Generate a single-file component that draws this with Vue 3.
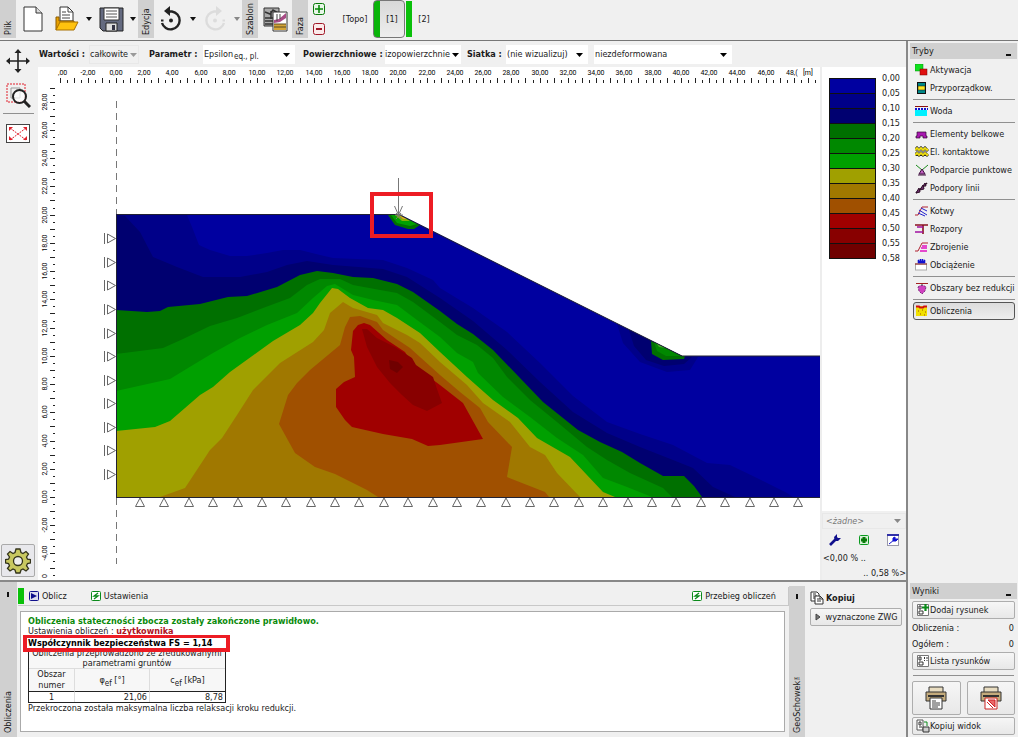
<script setup>
import { ref } from 'vue'

const valueKind = ref('całkowite')
const parameter = ref('Epsilon')
const surfaces = ref('izopowierzchnie')
const mesh = ref('(nie wizualizuj)')
const deformation = ref('niezdeformowana')
const preset = ref('<żadne>')

const SCALE = 14.12
const ORIGIN_X = 116
const ORIGIN_Y = 497

const label = (n) => `${n},00`
const range = (from, to, step = 1) => {
  const out = []
  for (let n = from; n <= to; n += step) out.push(n)
  return out
}

const topTicks = range(-8, 99).map((n) => ({
  x: Math.round(ORIGIN_X + (n / 2) * SCALE),
  major: n % 2 === 0,
}))
const topLabels = range(-2, 46, 2).map((n) => ({
  x: Math.round(ORIGIN_X + n * SCALE),
  text: label(n),
}))
const sideTicks = range(-11, 58).map((n) => ({
  y: Math.round(ORIGIN_Y - (n / 2) * SCALE),
  major: n % 2 === 0,
}))
const sideLabels = range(-4, 28, 2).map((n) => ({
  y: Math.round(ORIGIN_Y - n * SCALE),
  text: label(n),
}))
const sideSupports = range(0, 10).map((i) => Math.round(238.4 + i * 23.53))
const baseSupports = range(0, 27).map((i) => Math.round(140 + i * 24.38))

const contours = [
  { fill: '#0000a0', points: '116,214 399,214 682,356 820,356 820,497 116,497' },
  {
    fill: '#000089',
    points:
      '116,215 187,215 192,227 199,245 210,250 230,256 247,256 267,253 283,250 300,250 320,255 333,258 357,259 383,260 407,268 433,280 440,288 473,308 507,332 540,363 573,396 607,422 640,434 673,445 707,463 730,465 757,478 787,493 793,497 116,497',
  },
  {
    fill: '#000070',
    points:
      '116,215 125,216 140,232 153,257 177,267 203,277 240,277 267,272 287,265 307,261 333,265 383,269 407,277 440,298 473,321 507,350 540,382 573,412 607,433 640,447 673,460 693,468 713,487 735,497 116,497',
  },
  {
    fill: '#007000',
    points:
      '116,310 147,312 160,311 168,307 200,304 228,297 247,296 277,287 300,275 317,271 333,273 353,277 373,278 397,284 413,292 440,311 457,324 473,334 493,350 520,378 543,402 578,430 600,442 622,452 640,463 663,476 684,476 694,486 702,497 116,497',
  },
  {
    fill: '#008800',
    points:
      '116,354 163,348 183,339 210,326 237,318 263,308 290,298 307,285 320,279 340,279 353,285 380,290 397,293 413,302 440,322 457,335 477,345 493,358 507,377 530,400 557,422 587,447 607,460 630,473 663,488 672,497 116,497',
  },
  {
    fill: '#00a000',
    points:
      '116,391 170,379 193,365 213,353 240,338 267,325 297,313 313,298 327,286 335,284 353,295 373,300 397,305 417,320 440,337 457,353 473,362 478,373 503,397 530,417 557,438 583,455 603,478 627,487 652,497 116,497',
  },
  {
    fill: '#a0a000',
    points:
      '116,431 155,427 170,421 200,395 213,387 230,372 273,341 300,325 313,313 320,303 332,288 338,289 350,298 368,308 383,310 397,318 420,333 440,352 467,377 493,400 518,418 537,438 570,457 603,492 615,497 116,497',
  },
  {
    fill: '#a07800',
    points:
      '160,497 185,488 210,450 222,438 237,415 253,390 280,363 313,342 324,330 330,313 343,302 353,308 377,315 383,323 407,335 420,343 440,362 467,385 483,403 510,422 530,447 545,455 557,473 580,497',
  },
  {
    fill: '#a05000',
    points:
      '378,497 367,490 335,474 315,467 295,453 279,424 288,395 297,383 310,370 340,345 345,327 350,317 360,316 377,322 383,330 410,348 440,375 460,392 480,408 488,422 512,447 507,477 545,492 549,497',
  },
  {
    fill: '#a00000',
    points:
      '358,325 364,323 370,325 387,340 405,352 413,365 440,385 463,403 483,439 440,445 428,446 412,439 383,434 352,427 345,420 336,407 336,389 344,382 355,377 354,357 351,350 353,331',
  },
  {
    fill: '#880000',
    points:
      '362,329 367,329 377,338 395,347 412,358 416,365 433,377 437,389 442,403 427,411 413,405 402,395 390,383 377,367 367,347',
  },
  { fill: '#700000', points: '389,360 398,362 403,367 397,373 390,369' },
  // crest
  { fill: '#007000', points: '388,215 395,225 408,229 414,229 420,225 399,215' },
  { fill: '#00a000', points: '391,215 397,223 410,226 417,224 400,215' },
  { fill: '#88b000', points: '395,215 402,221 410,221 400,215' },
  { fill: '#e0a030', points: '399,215 403,219 407,219' },
  // toe
  { fill: '#000089', points: '617,324 623,343 640,362 667,372 690,370 698,357 682,356' },
  { fill: '#000070', points: '629,330 634,346 646,360 664,366 684,364 692,357 682,356' },
  { fill: '#007000', points: '651,341 652,354 663,360 684,359 685,356 682,356' },
  { fill: '#008800', points: '654,342 657,351 666,356 681,356' },
  { fill: '#40a828', points: '656,343 659,347 666,348' },
]

const legendColors = [
  '#0000a0', '#000088', '#000070', '#007000', '#008800', '#00a000',
  '#a0a000', '#a07800', '#a05000', '#a00000', '#880000', '#700000',
]
const legendLabels = [
  '0,00', '0,05', '0,10', '0,15', '0,20', '0,25', '0,30',
  '0,35', '0,40', '0,45', '0,50', '0,55', '0,58',
]

const modeGroups = [
  [
    { id: 'activation', text: 'Aktywacja' },
    { id: 'assign', text: 'Przyporządkow.' },
  ],
  [{ id: 'water', text: 'Woda' }],
  [
    { id: 'beams', text: 'Elementy belkowe' },
    { id: 'contacts', text: 'El. kontaktowe' },
    { id: 'points', text: 'Podparcie punktowe' },
    { id: 'lines', text: 'Podpory linii' },
  ],
  [
    { id: 'anchors', text: 'Kotwy' },
    { id: 'props', text: 'Rozpory' },
    { id: 'reinf', text: 'Zbrojenie' },
    { id: 'load', text: 'Obciążenie' },
  ],
  [{ id: 'regions', text: 'Obszary bez redukcji' }],
  [{ id: 'analysis', text: 'Obliczenia' }],
]
const activeMode = ref('analysis')
const stage = ref('[1]')
</script>

<template>
  <div class="app">
    <header class="toolbar">
      <span class="vtab">Plik</span>
      <button class="tool" aria-label="Nowy">
        <svg width="20" height="26" viewBox="0 0 20 26"><path d="M1 1h12l6 6v18H1z" fill="#fff" stroke="#333" /><path d="M13 1v6h6" fill="#ddd" stroke="#333" /></svg>
      </button>
      <button class="tool" aria-label="Otwórz">
        <svg width="24" height="26" viewBox="0 0 24 26">
          <path d="M5 15V1h8l5 5v9z" fill="#fff" stroke="#333" /><path d="M13 1v5h5M7 6h4M7 9h8M7 12h8" fill="none" stroke="#444" />
          <path d="M1 24V11h3v4h15v3" fill="#e8a000" stroke="#8a5a00" /><path d="M1 24l4-8h18l-4 8z" fill="#ffc20e" stroke="#a87000" />
        </svg>
      </button>
      <button class="arrow" aria-label="Ostatnie pliki"><svg width="6" height="4" viewBox="0 0 6 4"><path d="M0 0h6L3 4z" fill="#111" /></svg></button>
      <button class="tool" aria-label="Zapisz">
        <svg width="25" height="25" viewBox="0 0 25 25">
          <path d="M1 1h23v23H4l-3-3z" fill="#646a80" stroke="#222" /><path d="M5 1h15v12H5z" fill="#fff" stroke="#333" /><path d="M7 4h11M7 7h11M7 10h11" stroke="#555" />
          <path d="M7 16h11v8H7z" fill="#ddd" stroke="#222" /><path d="M13 18h3v5h-3z" fill="#334" />
        </svg>
      </button>
      <button class="arrow" aria-label="Zapisz jako"><svg width="6" height="4" viewBox="0 0 6 4"><path d="M0 0h6L3 4z" fill="#111" /></svg></button>
      <span class="vtab">Edycja</span>
      <button class="tool" aria-label="Cofnij">
        <svg width="24" height="26" viewBox="0 0 24 26"><path d="M9 5.500h4A9 9 0 1 1 3 17" fill="none" stroke="#222" stroke-width="2.400" /><path d="M2 14.500h2.500" stroke="#222" stroke-width="2" /><path d="M11 0v10L5 5z" fill="#222" /><circle cx="12" cy="14.500" r="2" fill="#222" /></svg>
      </button>
      <button class="arrow" aria-label="Lista cofnięć"><svg width="6" height="4" viewBox="0 0 6 4"><path d="M0 0h6L3 4z" fill="#111" /></svg></button>
      <button class="tool" aria-label="Ponów" disabled>
        <svg width="24" height="26" viewBox="0 0 24 26"><path d="M15 5.500h-4A9 9 0 1 0 21 17" fill="none" stroke="#dcdcdc" stroke-width="2.400" /><path d="M19.500 14.500H22" stroke="#dcdcdc" stroke-width="2" /><path d="M13 0v10l6-5z" fill="#dcdcdc" /><circle cx="12" cy="14.500" r="2" fill="#dcdcdc" /></svg>
      </button>
      <button class="arrow" aria-label="Lista ponowień" disabled><svg width="6" height="4" viewBox="0 0 6 4"><path d="M0 0h6L3 4z" fill="#888" /></svg></button>
      <span class="vtab">Szablon</span>
      <button class="tool" aria-label="Szablon">
        <svg width="25" height="26" viewBox="0 0 25 26">
          <path d="M1 2h15v18H1z" fill="#aaa" stroke="#333" /><path d="M2 6l5 2 3-4 5 3M2 12h8M8 5v8M2 15h8M2 18h8" fill="none" stroke="#333" stroke-width="1.500" />
          <path d="M10 6h14v19H10z" fill="#fff" stroke="#333" /><path d="M11 14l5-1 7-6v5l-6 4-6 1z" fill="#a84c86" /><path d="M14 8v7M17 8v5" stroke="#444" /><path d="M11 18h12v6H11z" fill="#d4a437" /><path d="M11 18h12M11 21h12" stroke="#5a4a20" />
        </svg>
      </button>
      <span class="vtab">Faza</span>
      <div class="stage-edit">
        <button class="mini" aria-label="Dodaj fazę"><svg width="12" height="12" viewBox="0 0 12 12"><rect x=".5" y=".5" width="11" height="11" rx="2" fill="#e8f6e8" stroke="#0a7a0a" /><path d="M6 2v8M2 6h8" stroke="#0a8a0a" stroke-width="1.600" /></svg></button>
        <button class="mini" aria-label="Usuń fazę"><svg width="12" height="12" viewBox="0 0 12 12"><rect x=".5" y=".5" width="11" height="11" rx="2" fill="#fbeaea" stroke="#a01828" /><path d="M3 6h6" stroke="#a01828" stroke-width="2" /></svg></button>
      </div>
      <button class="stage topo" @click="stage = '[Topo]'">[Topo]</button>
      <button class="stage current" @click="stage = '[1]'">[1]</button>
      <span class="stage-bar"></span>
      <button class="stage" @click="stage = '[2]'">[2]</button>
    </header>

    <div class="workspace">
      <div class="left">
        <div class="upper">
          <nav class="side-tools" aria-label="Widok">
            <button class="tool" aria-label="Przesuń">
              <svg width="24" height="24" viewBox="0 0 24 24"><path d="M12 3v18M3 12h18" stroke="#222" stroke-width="1.600" /><path d="M12 0l3.500 4h-7zM12 24l3.500-4h-7zM0 12l4-3.500v7zM24 12l-4-3.500v7z" fill="#222" /></svg>
            </button>
            <button class="tool" aria-label="Powiększ obszar">
              <svg width="26" height="26" viewBox="0 0 26 26"><path d="M2 2h18v18H2z" fill="none" stroke="#e0202c" stroke-dasharray="2 1" /><path d="M6 6h9v10H6z" fill="none" stroke="#999" /><circle cx="14.500" cy="14.500" r="6.500" fill="#fff" fill-opacity=".7" stroke="#222" stroke-width="2" /><path d="M19 19l6 6" stroke="#222" stroke-width="3" /></svg>
            </button>
            <hr />
            <button class="tool" aria-label="Pokaż wszystko">
              <svg width="26" height="20" viewBox="0 0 26 20"><rect x="1.500" y=".5" width="23" height="18" fill="#fff" stroke="#444" /><path d="M5 4l16 12M21 4L5 16" stroke="#e0202c" stroke-dasharray="2 1" /><path d="M4 7V3h4zM22 7V3h-4zM4 12v4h4zM22 12v4h-4z" fill="#e0202c" /></svg>
            </button>
            <button class="gear" aria-label="Ustawienia widoku">
              <svg width="26" height="26" viewBox="-13 -13 26 26">
                <path d="M-2-12h4l1 3.500 2 1L8-9.500 10.500-7 8.500-4l1 2.200 3 .3v3.500l-3 .5-1 2.200 2 3L8 10 5 8 3 9l-1 3h-4l-1-3-2-1-3 2-2.500-2.500 2-2.800-1-2.200-3-.5v-3.500l3-.3 1-2.200-2-3L-8-9.500l3 2 2-1z" fill="#c8c860" stroke="#33331a" stroke-width="1.300" />
                <circle r="4.500" fill="#eee" stroke="#33331a" stroke-width="1.300" />
              </svg>
            </button>
          </nav>

          <div class="center">
            <form class="params" @submit.prevent>
              <label for="kind">Wartości :</label>
              <span class="drop off"><select id="kind" v-model="valueKind" disabled><option>całkowite</option></select><svg width="7" height="4" viewBox="0 0 7 4"><path d="M0 0h7L3.500 4z" fill="#999" /></svg></span>
              <label for="param">Parametr :</label>
              <span class="drop"><select id="param" v-model="parameter"><option>Epsilon</option></select><sub>eq., pl.</sub><svg width="7" height="4" viewBox="0 0 7 4"><path d="M0 0h7L3.500 4z" fill="#000" /></svg></span>
              <label for="surf">Powierzchniowe :</label>
              <span class="drop tight"><select id="surf" v-model="surfaces"><option>izopowierzchnie</option></select><svg width="7" height="4" viewBox="0 0 7 4"><path d="M0 0h7L3.500 4z" fill="#000" /></svg></span>
              <label for="mesh">Siatka :</label>
              <span class="drop"><select id="mesh" v-model="mesh"><option>(nie wizualizuj)</option></select><svg width="7" height="4" viewBox="0 0 7 4"><path d="M0 0h7L3.500 4z" fill="#000" /></svg></span>
              <span class="drop"><select v-model="deformation" aria-label="Deformacja"><option>niezdeformowana</option></select><svg width="7" height="4" viewBox="0 0 7 4"><path d="M0 0h7L3.500 4z" fill="#000" /></svg></span>
            </form>

            <div class="view">
              <div class="canvas">
                <svg class="plot" viewBox="38 67 782 512" preserveAspectRatio="xMinYMin meet" role="img" aria-label="Odkształcenia plastyczne">
                  <g class="ruler">
                    <text x="58" y="75">,00</text>
                    <text v-for="l in topLabels" :key="l.text" :x="l.x" y="75" text-anchor="middle">{{ l.text }}</text>
                    <text x="786" y="75">48,(</text>
                    <text x="803" y="75">[m]</text>
                    <text v-for="l in sideLabels" :key="l.text" :transform="`translate(47 ${l.y}) rotate(-90)`" text-anchor="middle">{{ l.text }}</text>
                    <text transform="translate(47 578) rotate(-90)">0</text>
                  </g>
                  <g fill="#222">
                    <rect v-for="t in topTicks" :key="t.x" :x="t.x" :y="t.major ? 78 : 80" width="1" :height="t.major ? 5 : 3" />
                    <rect v-for="t in sideTicks" :key="t.y" :x="t.major ? 50 : 53" :y="t.y" :width="t.major ? 5 : 2" height="1" />
                  </g>
                  <path d="M116.500 101V214M116.500 498V564" stroke="#777" stroke-dasharray="7 5" />
                  <polygon v-for="(c, i) in contours" :key="i" :points="c.points" :fill="c.fill" />
                  <path d="M116.500 497.500V214.500H399L682 356H820M116 497.500H820" fill="none" stroke="#223" />
                  <g fill="#fff" stroke="#666">
                    <path v-for="y in sideSupports" :key="y" :d="`M104.500 ${y - 5}v11M107.500 ${y - 4}v9l8-4.500z`" />
                    <path v-for="x in baseSupports" :key="x" :d="`M${x} 498l-4.500 8.500h9z`" />
                  </g>
                  <path d="M398.500 178V216M394.500 206l4 9 4-9M395 215h8M396 219l5-6M396 213l5 6" fill="none" stroke="#777" />
                  <rect x="372" y="194" width="59" height="42" fill="none" stroke="#ed1c24" stroke-width="4" />
                </svg>
              </div>

              <div class="legend-panel">
                <div class="legend">
                  <div class="swatches"><i v-for="c in legendColors" :key="c" :style="{ background: c }"></i></div>
                  <div class="legend-labels"><span v-for="l in legendLabels" :key="l">{{ l }}</span></div>
                </div>
                <div class="scale">
                  <span class="drop off preset"><select v-model="preset" aria-label="Skala" disabled><option>&lt;żadne&gt;</option></select><svg width="7" height="4" viewBox="0 0 7 4"><path d="M0 0h7L3.500 4z" fill="#888" /></svg></span>
                  <div class="scale-tools">
                    <button class="mini" aria-label="Edytuj skalę"><svg width="12" height="12" viewBox="0 0 12 12"><path d="M1 11l6-6" stroke="#10108c" stroke-width="2.600" /><path d="M6 7L5 3l3-3v3l1 1h3L9 7z" fill="#10108c" /></svg></button>
                    <button class="mini" aria-label="Dodaj skalę"><svg width="12" height="12" viewBox="0 0 12 12"><rect x="1.500" y="1.500" width="9" height="9" rx="1" fill="#d8f0d8" stroke="#0a9a20" /><path d="M6 3v6M3 6h6" stroke="#0a7a0a" stroke-width="3" /></svg></button>
                    <button class="mini" aria-label="Ustawienia skali"><svg width="12" height="12" viewBox="0 0 12 12"><rect x=".5" y=".5" width="11" height="11" fill="#fff" stroke="#99a" /><path d="M0 1h12" stroke="#3030a8" stroke-width="2" /><path d="M2 10l5-4M6 7V4l2-1v2h3L9 7z" fill="#1010d0" stroke="#1010d0" /></svg></button>
                  </div>
                  <div class="low">&lt;0,00 % ..</div>
                  <div class="high">.. 0,58 %&gt;</div>
                </div>
              </div>
            </div>
          </div>
        </div>

        <div class="lower">
          <div class="vtab tall"><span>Obliczenia</span><b></b></div>
          <section class="output">
            <div class="run-bar">
              <span class="run-mark"></span>
              <button class="flat"><svg width="10" height="10" viewBox="0 0 10 10"><rect x=".5" y=".5" width="9" height="9" rx="1" fill="#dde" stroke="#10108c" /><path d="M2 2l6 3-6 3z" fill="#10108c" /></svg>Oblicz</button>
              <button class="flat settings"><svg width="10" height="10" viewBox="0 0 10 10"><rect x=".5" y=".5" width="9" height="9" rx="1" fill="#fff" stroke="#0a8a1a" /><path d="M7 2L3 5h4L3 8" fill="none" stroke="#0a8a1a" stroke-width="1.300" /></svg>Ustawienia</button>
              <button class="flat progress"><svg width="10" height="10" viewBox="0 0 10 10"><rect x=".5" y=".5" width="9" height="9" rx="1" fill="#fff" stroke="#0a8a1a" /><path d="M7 2L3 5h4L3 8" fill="none" stroke="#0a8a1a" stroke-width="1.300" /></svg>Przebieg obliczeń</button>
            </div>
            <div class="report">
              <p class="ok">Obliczenia stateczności zbocza zostały zakończone prawidłowo.</p>
              <p>Ustawienia obliczeń : <b class="user">użytkownika</b></p>
              <p class="fs">Współczynnik bezpieczeństwa FS = 1,14</p>
              <table>
                <colgroup><col class="c1" /><col /><col /></colgroup>
                <thead>
                  <tr class="title"><th colspan="3">Obliczenia przeprowadzono ze zredukowanymi<br />parametrami gruntów</th></tr>
                  <tr class="cols"><th>Obszar<br />numer</th><th>φ<sub>ef</sub> [°]</th><th>c<sub>ef</sub> [kPa]</th></tr>
                </thead>
                <tbody>
                  <tr><td class="num">1</td><td>21,06</td><td>8,78</td></tr>
                </tbody>
              </table>
              <p>Przekroczona została maksymalna liczba relaksacji kroku redukcji.</p>
            </div>
          </section>
          <div class="vtab tall geo"><span>GeoSchowek™</span><b></b></div>
          <section class="clip">
            <h2><svg width="14" height="14" viewBox="0 0 14 14"><path d="M1 1h6l2 2v7H1z" fill="#fff" stroke="#333" /><path d="M3 3h3M3 5h4M3 7h4" stroke="#333" /><path d="M5 5h5l3 3v5H5z" fill="#fff" stroke="#333" /><path d="M7 8h3M7 10h4M10 5v3h3" fill="none" stroke="#333" /></svg>Kopiuj</h2>
            <button class="push center-text"><svg width="6" height="8" viewBox="0 0 6 8"><path d="M1 1l4 3-4 3z" fill="#777" stroke="#444" /></svg>wyznaczone ZWG</button>
          </section>
        </div>
      </div>

      <aside class="right">
        <h2 class="bar">Tryby<b></b></h2>
        <nav class="modes">
          <div v-for="(group, g) in modeGroups" :key="g" class="group">
            <button v-for="m in group" :key="m.id" :class="['mode', { active: activeMode === m.id }]" @click="activeMode = m.id">
              <svg width="14" height="12" viewBox="0 0 14 12">
                <template v-if="m.id === 'activation'"><rect x="0" width="8" height="7" fill="#10e020" stroke="#0a8a0a" stroke-width=".5" /><rect x="5" y="5" width="7" height="6" fill="#e01010" stroke="#700" stroke-width=".5" /></template>
                <template v-else-if="m.id === 'assign'"><rect x="2.500" y=".5" width="8" height="11" fill="#088" stroke="#111" /><rect x="3" y="4" width="7" height="4" fill="#ffe820" stroke="#111" stroke-width=".5" /></template>
                <template v-else-if="m.id === 'water'"><path d="M0 1.500h13" stroke="#8a1010" /><path d="M0 4h13" stroke="#1010d0" stroke-width="2" stroke-dasharray="2 1" /><rect x="0" y="5" width="12" height="6" fill="#00f0ff" /></template>
                <template v-else-if="m.id === 'beams'"><path d="M2 4h9v4h1v2H8V8H5v2H1V8h1z" fill="#a818b0" stroke="#301030" stroke-width=".7" /></template>
                <template v-else-if="m.id === 'contacts'"><path d="M0 4l2-2 2 2 2-2 2 2 2-2 2 2 1-1M0 9l2-2 2 2 2-2 2 2 2-2 2 2 1-1" fill="none" stroke="#222" stroke-width="3" /><path d="M0 4l2-2 2 2 2-2 2 2 2-2 2 2 1-1M0 9l2-2 2 2 2-2 2 2 2-2 2 2 1-1" fill="none" stroke="#f0e010" stroke-width="1.800" /></template>
                <template v-else-if="m.id === 'points'"><path d="M1 1l6 5 6-5" fill="none" stroke="#1a8a1a" /><path d="M7 5l3 5H4z" fill="#c060c0" stroke="#401040" /><path d="M3 11h8" stroke="#401040" /></template>
                <template v-else-if="m.id === 'lines'"><path d="M1 11L12 1" stroke="#30102a" stroke-width="1.600" /><path d="M1 11l3-5 1 4zM5 8l3-5 1 4zM8 4l2-3 1 3z" fill="#703070" stroke="#30102a" /></template>
                <template v-else-if="m.id === 'anchors'"><path d="M0 10h3l4-8h6" fill="none" stroke="#b02030" /><path d="M4 5l8 5M3 8l7 3M6 3l6 3" stroke="#2020d0" /></template>
                <template v-else-if="m.id === 'props'"><path d="M0 2h8v9M8 2h5" fill="none" stroke="#8a1020" stroke-width="1.600" /><path d="M0 9h8M2 4h6" fill="none" stroke="#a010a0" stroke-width="1.500" /></template>
                <template v-else-if="m.id === 'reinf'"><path d="M0 10h3l4-8h6" fill="none" stroke="#b02030" /><path d="M7 5h5M6 7h6M5 10h7" stroke="#e010c0" stroke-width="1.300" /></template>
                <template v-else-if="m.id === 'load'"><rect x=".5" y="5" width="11" height="6" fill="#fff" stroke="#aaa" /><path d="M0 5h12" stroke="#811" /><path d="M3 4V1h1v1h1V0h1v2h1V0h1v2h1V1h1v3z" fill="#1010d0" stroke="#1010d0" stroke-width=".6" /></template>
                <template v-else-if="m.id === 'regions'"><path d="M1 1.500h12" stroke="#a02020" /><path d="M7 2v3" stroke="#333" /><path d="M3 5c2-2 6-2 8 0l-1 4-3 3-3-3z" fill="#d040c0" stroke="#803080" stroke-dasharray="2 1" /></template>
                <template v-else><rect x="1" y="1" width="11" height="10" fill="#f0e000" /><path d="M1 1.500h3l1 1h3l1-1h3" fill="none" stroke="#d01010" stroke-width="2" /><path d="M3 6h1M7 5h1M10 7h1M5 9h1M9 10h1" stroke="#a05000" /></template>
              </svg>{{ m.text }}
            </button>
          </div>
        </nav>

        <div class="results">
          <h2 class="bar">Wyniki<b></b></h2>
          <button class="push"><svg width="14" height="14" viewBox="0 0 14 14"><path d="M1.500 1.500h11v11h-11z" fill="#fff" stroke="#777" /><path d="M3 3h2v3H3zM3 8h4v3H3z" fill="none" stroke="#333" /><path d="M9.500 1v7M6 4.500h7" stroke="#0a8a1a" stroke-width="2.200" /></svg>Dodaj rysunek</button>
          <dl><dt>Obliczenia :</dt><dd>0</dd><dt>Ogółem :</dt><dd>0</dd></dl>
          <button class="push flush"><svg width="14" height="14" viewBox="0 0 14 14"><path d="M1.500 1.500h11v11h-11z" fill="#fff" stroke="#777" /><path d="M3 3h2v3H3zM3 8h4v3H3z" fill="none" stroke="#333" /><path d="M8.500 3v4M11 3v4" stroke="#333" stroke-dasharray="2 1" /></svg>Lista rysunków</button>
          <hr />
          <div class="printers">
            <button class="push" aria-label="Drukuj raport"><svg width="22" height="26" viewBox="0 0 22 26"><path d="M4 7V2h14v5" fill="#e8dcc0" stroke="#333" /><path d="M1 7h20v9H1z" fill="#c4ab7c" stroke="#333" /><path d="M3 11h16" stroke="#333" stroke-width="2" /><path d="M5 13h12v11H5z" fill="#fff" stroke="#333" /><path d="M7 16h4M7 18h8M7 20h8M7 22h6" stroke="#444" /></svg></button>
            <button class="push" aria-label="Drukuj widok"><svg width="22" height="26" viewBox="0 0 22 26"><path d="M4 7V2h14v5" fill="#e8dcc0" stroke="#333" /><path d="M1 7h20v9H1z" fill="#c4ab7c" stroke="#333" /><path d="M3 11h16" stroke="#333" stroke-width="2" /><path d="M5 13h12v11H5z" fill="#fff" stroke="#c22" /><path d="M8 15h7v7zM7 17l6 6" fill="#e86a6a" stroke="#d01c24" /></svg></button>
          </div>
          <button class="push"><svg width="14" height="14" viewBox="0 0 14 14"><path d="M1 1h6v10H1z" fill="#fff" stroke="#555" /><path d="M3 3h2v3H3zM3 8h3" fill="none" stroke="#333" /><path d="M8 3h3v4" fill="none" stroke="#0a8a1a" /><path d="M7 8h6v5H7z" fill="#ccc" stroke="#333" /></svg>Kopiuj widok</button>
        </div>
      </aside>
    </div>
  </div>
</template>

<style>
html, body { background: #fff; }
</style>

<style scoped>
* { box-sizing: border-box; }
.app {
  display: flex;
  flex-direction: column;
  min-height: 100vh;
  border: 0 solid #fff;
  border-width: 0 5px 2px 0;
  background: #f0f0f0;
  color: #1a1a1a;
  font-family: "DejaVu Sans Condensed", "DejaVu Sans", sans-serif;
  font-size: 9px;
  line-height: 11px;
}
button, select { font: inherit; color: inherit; margin: 0; padding: 0; border: 0; background: none; }
svg { display: block; flex: none; }
h2, p, dl, dd { margin: 0; font-size: inherit; font-weight: normal; }
hr { margin: 0; border: 0; border-top: 1px solid #909090; }

.toolbar { display: flex; align-items: center; height: 41px; padding-bottom: 2px; border-bottom: 1px solid #777; }
.vtab {
  width: 16px;
  height: 38px;
  padding: 3px 0;
  background: #d0d0d0;
  writing-mode: vertical-rl;
  transform: rotate(180deg);
  line-height: 16px;
}
.tool { display: grid; place-items: center; width: 34px; }
.arrow { display: grid; place-items: center; width: 10px; height: 20px; }
.mini { display: grid; place-items: center; }
.stage-edit { display: flex; flex-direction: column; gap: 8px; padding: 0 5px; }
.stage { width: 24px; height: 38px; }
.stage.topo { width: 36px; margin-left: 7px; }
.stage.current {
  width: 32px;
  padding-left: 6px;
  border: 1px solid #777;
  border-radius: 4px;
  background: linear-gradient(90deg, #0ab40a 6px, transparent 6px), linear-gradient(#d8d8d8, #eee);
}
.stage-bar { width: 6px; height: 36px; margin-left: 1px; background: #0ac00a; }

.workspace { flex: 1; display: flex; }
.left { flex: 1; min-width: 0; display: flex; flex-direction: column; }
.upper { flex: 1; display: flex; border-bottom: 2px solid #888; }
.side-tools { display: flex; flex-direction: column; align-items: center; gap: 9px; width: 38px; padding: 8px 2px 3px 0; }
.side-tools hr { width: 31px; margin: -4px 0 1px; }
.gear {
  display: grid;
  place-items: center;
  width: 34px;
  height: 33px;
  margin-top: auto;
  border: 1px solid #aaa;
  border-radius: 2px;
  background: #e8e8ec;
}
.center { flex: 1; min-width: 0; display: flex; flex-direction: column; }
.params {
  display: grid;
  grid-template-columns: 50px 50px 10px 54px 92px 8px 82px 76px 6px 39px 82px 6px 138px;
  align-items: center;
  height: 26px;
  padding-left: 1px;
}
.params label { white-space: nowrap; font-weight: bold; }
.params label:nth-of-type(1) { grid-column: 1; }
.params label:nth-of-type(2) { grid-column: 4; }
.params label:nth-of-type(3) { grid-column: 7; }
.params label:nth-of-type(4) { grid-column: 10; }
.params .drop:last-child { grid-column: 13; }
.drop { position: relative; display: block; height: 19px; background: #fff; }
.drop.off { border: 1px solid #e8e8e8; background: #f0f0f0; }
.drop select { appearance: none; width: 100%; height: 100%; padding-left: 1px; opacity: 1; color: #222; }
.drop.off select, .drop.tight select { padding-left: 0; }
.drop svg { position: absolute; right: 5px; top: 8px; pointer-events: none; }
.drop.off svg { right: 1px; top: 7px; }
.drop.tight svg { right: 2px; }
.drop sub { position: absolute; left: 31px; top: 6px; font-size: 8px; pointer-events: none; }

.view { flex: 1; display: flex; }
.canvas { flex: 1; min-width: 0; background: #fff; border-right: 2px solid #ededed; }
.plot { width: 100%; }
.ruler { font-family: Roboto, "Liberation Sans", sans-serif; font-size: 7px; fill: #000; }
.legend-panel { display: flex; flex-direction: column; width: 84px; background: #fff; }
.legend { display: flex; gap: 6px; padding: 11px 0 0 7px; }
.swatches { width: 47px; height: max-content; border: 1px solid #111; border-bottom: 0; }
.swatches i { display: block; height: 15px; border-bottom: 1px solid #111; }
.legend-labels { display: flex; flex-direction: column; margin-top: -7px; line-height: 15px; }
.scale { margin-top: auto; padding: 2px 0 0; background: #f0f0f0; }
.preset { height: 16px; }
.drop.preset select { color: #777; font-style: italic; padding-left: 3px; }
.preset.drop svg { top: 5px; right: 4px; }
.scale-tools { display: flex; justify-content: space-between; padding: 5px 7px; }
.low { padding: 2px 1px; line-height: 11px; }
.high { text-align: right; line-height: 14px; }

.lower { display: flex; height: 155px; }
.vtab.tall { display: flex; justify-content: space-between; width: 17px; height: auto; padding: 4px 0 10px; }
.vtab.tall b { width: 2px; height: 5px; margin: 0 7px; background: #111; }
.vtab.geo { margin-top: 4px; width: 16px; padding-bottom: 8px; }
.output { flex: 1; min-width: 0; display: flex; flex-direction: column; padding: 5px 4px 5px 1px; }
.run-bar { display: flex; align-items: center; height: 19px; border: 0 solid #c8c8c8; border-width: 0 1px 1px 0; margin-right: -4px; }
.run-mark { width: 6px; height: 16px; margin-right: 5px; background: #0ac00a; }
.flat { display: flex; align-items: center; gap: 3px; }
.flat.settings { margin-left: 24px; }
.flat.progress { margin-left: auto; margin-right: 12px; }
.report { flex: 1; margin: 5px 0 0 2px; padding: 4px 7px; border: 1px solid #aaa; background: #fff; line-height: 11px; }
.report p { line-height: 10px; white-space: nowrap; }
.ok { color: #0a8a0a; font-weight: bold; }
.user { color: #b01020; }
.report p.fs {
  position: relative;
  width: 207px;
  margin: -1px 0 -5px -5px;
  padding: 0 1px;
  border: 4px solid #ed1c24;
  border-width: 3px 4px 4px;
  background: #fff;
  color: #000;
  font-weight: bold;
}
.report table { width: 198px; table-layout: fixed; border: 1px solid #222; border-collapse: separate; border-spacing: 0; }
.report .c1 { width: 46px; }
.report th, .report td { padding: 0; border: 0 solid #ddd; border-width: 0 1px 1px 0; }
.report th { background: #f7f7f7; font-weight: normal; text-align: center; }
.report th:last-child, .report td:last-child { border-right: 0; }
.report .title th { white-space: nowrap; line-height: 10px; }
.report .cols th { border-bottom-color: #222; }
.report sub { font-size: 8px; line-height: 0; }
.report td { padding: 0 2px; border-bottom: 0; text-align: right; line-height: 10px; }
.report td.num { text-align: center; }
.clip { width: 101px; padding: 9px 4px 0 5px; }
.clip h2 { display: flex; align-items: center; gap: 2px; margin-bottom: 3px; font-weight: bold; }
.push {
  display: flex;
  align-items: center;
  gap: 2px;
  height: 18px;
  padding: 0 3px;
  border: 1px solid #adadad;
  border-radius: 2px;
  background: linear-gradient(#f6f6f6, #e8e8e8);
  white-space: nowrap;
}
.push.center-text { width: 100%; justify-content: center; gap: 5px; }

.right { display: flex; flex-direction: column; width: 112px; padding: 2px 1px 2px 2px; border-left: 2px solid #888; }
.bar { display: flex; justify-content: space-between; height: 16px; padding: 0 6px 0 2px; background: #d0d0d0; line-height: 16px; }
.bar b { width: 5px; height: 2px; margin-top: 11px; background: #111; }
.modes { padding: 2px 2px 0 3px; }
.group + .group { margin-top: 2px; padding-top: 2px; border-top: 1px solid #909090; }
.mode { display: flex; align-items: center; gap: 1px; width: 100%; height: 18px; padding-left: 1px; border: 1px solid transparent; white-space: nowrap; }
.mode.active { border-color: #555; border-radius: 3px; background: linear-gradient(#dcdcdc, #eee); }
.results { display: flex; flex-direction: column; margin-top: auto; }
.results .push { margin: 2px 2px 0; gap: 0; }
.results .push.flush { margin-top: 0; }
.results dl { display: grid; grid-template-columns: 1fr auto; padding: 1px 3px 0 2px; line-height: 16px; }
.results hr { margin: 5px 3px 3px; }
.printers { display: flex; gap: 2px; }
.results .printers .push { flex: 1; height: 34px; justify-content: center; }
</style>
